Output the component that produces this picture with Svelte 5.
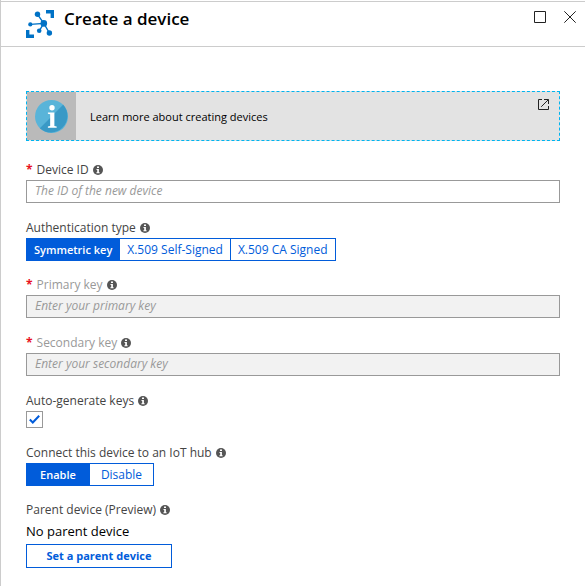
<script>
  let deviceId = $state('');
  let auth = $state('Symmetric key');
  let autoGenerate = $state(true);
  let connect = $state('Enable');
  const authTypes = ['Symmetric key', 'X.509 Self-Signed', 'X.509 CA Signed'];
  const connectOptions = ['Enable', 'Disable'];
</script>

{#snippet info()}
  <svg class="info" viewBox="0 0 10 10" aria-hidden="true">
    <circle cx="5" cy="5" r="5" fill="#555" />
    <path d="M4 1.6h2v1.5H4zM3.5 4h2.4v3.3h.7v.9H3.4v-.9h.8V4.9h-.7z" fill="#fff" />
  </svg>
{/snippet}

{#snippet segments(options, selected, choose, label)}
  <div class="segments" role="group" aria-label={label}>
    {#each options as option}
      <button type="button" class:selected={option === selected} aria-pressed={option === selected} onclick={() => choose(option)}>{option}</button>
    {/each}
  </div>
{/snippet}

<main class="blade">
  <header>
    <svg class="logo" viewBox="0 0 28 28" aria-hidden="true">
      <g fill="#0072c6">
        <path d="M20 0h8v8h-3.400V3.400H20zM0 20h3.400v4.600H8V28H0z" />
        <circle cx="11.5" cy="4.300" r="2.700" />
        <circle cx="17.800" cy="13.400" r="3.300" />
        <circle cx="4.300" cy="14.400" r="2.100" />
        <circle cx="13.200" cy="20.800" r="2.300" />
        <circle cx="23.400" cy="23" r="2.700" />
      </g>
      <path d="M11.500 4.300l6.300 9.100-13.500 1M13.200 20.800l4.600-7.400 5.600 9.600" fill="none" stroke="#0072c6" stroke-width="1.400" />
    </svg>
    <h1>Create a device</h1>
    <div class="window-actions">
      <button type="button" aria-label="Maximize">
        <svg viewBox="0 0 12 12"><path d="M.5.5h11v11H.5z" /></svg>
      </button>
      <button type="button" aria-label="Close">
        <svg viewBox="0 0 12 12"><path d="M.3.3l11.400 11.400M11.700.3L.3 11.700" /></svg>
      </button>
    </div>
  </header>

  <form onsubmit={(e) => e.preventDefault()}>
    <a class="banner" href="#learn-more">
      <span class="banner-icon">
        <svg viewBox="0 0 32 32" aria-hidden="true">
          <circle cx="16" cy="16" r="16" fill="#59b4d9" />
          <path d="M27.300 4.700A16 16 0 0 1 4.700 27.300z" fill="#3999c6" />
          <circle cx="16.500" cy="7.500" r="2.600" fill="#fff" />
          <path d="M12.500 12h6.300v13.200l2.200.5V27h-8.500v-1.300l2.200-.5V13.800l-2.200-.5z" fill="#fff" />
        </svg>
      </span>
      <span class="banner-text">Learn more about creating devices</span>
      <svg class="external" viewBox="0 0 11 11" aria-hidden="true">
        <path d="M4 .5H.5v10h10V7M6 .5h4.500V5M10.300.7L3.200 7.800" />
      </svg>
    </a>

    <div class="field">
      <label for="device-id"><span class="required">*</span>Device ID {@render info()}</label>
      <input id="device-id" type="text" placeholder="The ID of the new device" bind:value={deviceId} />
    </div>

    <div class="field choice">
      <div class="label">Authentication type {@render info()}</div>
      {@render segments(authTypes, auth, (v) => (auth = v), 'Authentication type')}
    </div>

    <div class="field">
      <label class="muted" for="primary-key"><span class="required">*</span>Primary key {@render info()}</label>
      <input id="primary-key" type="text" placeholder="Enter your primary key" disabled={autoGenerate} />
    </div>

    <div class="field">
      <label class="muted" for="secondary-key"><span class="required">*</span>Secondary key {@render info()}</label>
      <input id="secondary-key" type="text" placeholder="Enter your secondary key" disabled={autoGenerate} />
    </div>

    <div class="field">
      <label for="auto-generate">Auto-generate keys {@render info()}</label>
      <span class="tick">
        <input id="auto-generate" type="checkbox" bind:checked={autoGenerate} />
        {#if autoGenerate}
          <svg viewBox="0 0 11 9" aria-hidden="true"><path d="M.8 4.500l3 3L10.200.8" /></svg>
        {/if}
      </span>
    </div>

    <div class="field choice even">
      <div class="label">Connect this device to an IoT hub {@render info()}</div>
      {@render segments(connectOptions, connect, (v) => (connect = v), 'Connect this device to an IoT hub')}
    </div>

    <div class="field">
      <div class="label">Parent device (Preview) {@render info()}</div>
      <p>No parent device</p>
      <button type="button" class="parent">Set a parent device</button>
    </div>
  </form>
</main>

<style>
  :global(body) {
    background: #fff;
  }
  .blade {
    box-sizing: border-box;
    min-height: 100vh;
    padding-top: 1px;
    border-left: 1px solid #ccc;
    font-family: 'Open Sans', 'Noto Sans', sans-serif;
    font-size: 12px;
    color: #000;
  }
  svg {
    display: block;
  }
  button,
  input {
    box-sizing: border-box;
    margin: 0;
    font: inherit;
  }
  button {
    cursor: pointer;
  }
  header {
    box-sizing: border-box;
    height: 46px;
    display: flex;
    align-items: flex-start;
    padding: 8px 9px 0 25px;
    border-top: 1px solid #ccc;
    border-bottom: 1px solid #ccc;
  }
  .logo {
    width: 28px;
    height: 28px;
  }
  h1 {
    flex: 1;
    margin: 0 0 0 10px;
    font-size: 17px;
    line-height: 18px;
    font-weight: 600;
  }
  .window-actions {
    display: flex;
    gap: 18px;
    padding-top: 1px;
  }
  .window-actions button {
    padding: 0;
    border: 0;
    background: none;
  }
  .window-actions svg {
    width: 12px;
    height: 12px;
    fill: none;
    stroke: #222;
  }
  form {
    padding: 44px 25px 16px;
  }
  .banner {
    box-sizing: border-box;
    height: 50px;
    display: flex;
    align-items: center;
    margin-bottom: 17px;
    border: 1px dashed #00b4f0;
    background: #e3e3e3;
    color: #000;
    font-size: 11px;
    text-decoration: none;
  }
  .banner-icon {
    display: flex;
    align-items: center;
    align-self: stretch;
    padding: 0 8px;
    background: #bababa;
  }
  .banner-icon svg {
    width: 33px;
    height: 33px;
  }
  .banner-text {
    flex: 1;
    padding-left: 14px;
  }
  .external {
    align-self: flex-start;
    width: 11px;
    height: 11px;
    margin: 7px 10px 0 0;
    fill: none;
    stroke: #222;
  }
  .field {
    margin-bottom: 13px;
  }
  .choice {
    margin-bottom: 12px;
  }
  label,
  .label {
    display: flex;
    align-items: center;
    height: 22px;
    color: #444;
  }
  .muted {
    color: #999;
  }
  .required {
    margin-right: 4px;
    color: #e81123;
    font-weight: 700;
  }
  .info {
    width: 10px;
    height: 10px;
    margin: 1px 0 0 4px;
  }
  input[type='text'] {
    display: block;
    width: 100%;
    height: 23px;
    padding: 0 8px 2px;
    border: 1px solid #999;
    border-radius: 0;
    background: #fff;
  }
  input[type='text']:disabled {
    background: #f2f2f2;
  }
  input::placeholder {
    color: #999;
    opacity: 1;
    font-style: italic;
  }
  .segments {
    display: flex;
  }
  .segments button {
    height: 23px;
    padding: 0 7px;
    border: 1px solid #015cda;
    background: #fff;
    color: #015cda;
    line-height: 20px;
  }
  .segments button + button {
    border-left-width: 0;
  }
  .segments .selected {
    background: #015cda;
    color: #fff;
    font-size: 11px;
    font-weight: 600;
  }
  .even .segments button {
    width: 64px;
  }
  .tick {
    display: grid;
    width: 17px;
    height: 17px;
    place-items: center;
  }
  .tick > * {
    grid-area: 1 / 1;
  }
  .tick input {
    appearance: none;
    width: 17px;
    height: 17px;
    border: 1px solid #999;
    background: #fff;
  }
  .tick svg {
    width: 11px;
    height: 9px;
    fill: none;
    stroke: #015cda;
    stroke-width: 2;
    pointer-events: none;
  }
  p {
    margin: 0 0 2px;
    font-size: 13px;
    line-height: 22px;
  }
  .parent {
    height: 24px;
    width: 146px;
    padding: 0;
    border: 1px solid #015cda;
    background: #fff;
    color: #015cda;
    font-size: 11px;
    font-weight: 700;
    line-height: 20px;
  }
</style>
